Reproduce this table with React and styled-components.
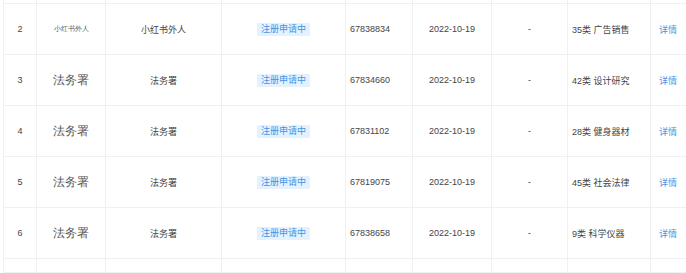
import React from "react";
import styled, { createGlobalStyle } from "styled-components";

const GlobalStyle = createGlobalStyle`
  html, body {
    margin: 0;
    padding: 0;
    background: #fff;
    overflow: hidden;
  }
  body {
    font-family: "Liberation Sans", "Noto Sans CJK SC", sans-serif;
    color: #333;
  }
`;

const COLS = "33px 69px 116px 124px 67px 79px 76px 83px 60px";

const Table = styled.div`
  margin-left: 3px;
  width: 710px;
`;

const Row = styled.div`
  display: grid;
  grid-template-columns: ${COLS};
  height: ${(p) => (p.$h ? `${p.$h}px` : "51px")};
`;

const Cell = styled.div`
  display: flex;
  align-items: center;
  justify-content: ${(p) => p.$align || "center"};
  padding: ${(p) => (p.$pad ? `0 ${p.$pad}px` : "0")};
  border-left: 1px solid #eef0f2;
  border-bottom: 1px solid #eef0f2;
  font-size: 9px;
  color: #444;
  white-space: nowrap;
  overflow: hidden;
`;

const Logo = styled.span`
  font-family: "Liberation Serif", serif;
  font-size: ${(p) => (p.$small ? "7.4px" : "11.5px")};
  color: #555;
  letter-spacing: ${(p) => (p.$small ? "0" : "0.3px")};
`;

const Tag = styled.span`
  display: inline-block;
  padding: 0 4px;
  height: 13px;
  line-height: 13px;
  background: #e4f2ff;
  color: #4592e6;
  font-size: 9px;
  border-radius: 1px;
`;

const Link = styled.span`
  color: #4a93e4;
  font-size: 9px;
`;

const rows = [
  { no: 2, logo: "小红书外人", small: true, name: "小红书外人", reg: "67838834", cls: "35类 广告销售" },
  { no: 3, logo: "法务署", name: "法务署", reg: "67834660", cls: "42类 设计研究" },
  { no: 4, logo: "法务署", name: "法务署", reg: "67831102", cls: "28类 健身器材" },
  { no: 5, logo: "法务署", name: "法务署", reg: "67819075", cls: "45类 社会法律" },
  { no: 6, logo: "法务署", name: "法务署", reg: "67838658", cls: "9类 科学仪器" },
];

const EmptyRow = ({ h }) => (
  <Row $h={h}>
    {Array.from({ length: 9 }, (_, i) => (
      <Cell key={i} />
    ))}
  </Row>
);

export default function App() {
  return (
    <>
      <GlobalStyle />
      <Table>
        <EmptyRow h={4} />
        {rows.map((r) => (
          <Row key={r.no}>
            <Cell>{r.no}</Cell>
            <Cell>
              <Logo $small={r.small}>{r.logo}</Logo>
            </Cell>
            <Cell>{r.name}</Cell>
            <Cell>
              <Tag>注册申请中</Tag>
            </Cell>
            <Cell $align="flex-start" $pad={4}>
              {r.reg}
            </Cell>
            <Cell>2022-10-19</Cell>
            <Cell>-</Cell>
            <Cell $align="flex-start" $pad={4}>
              {r.cls}
            </Cell>
            <Cell $align="flex-start" $pad={8}>
              <Link>详情</Link>
            </Cell>
          </Row>
        ))}
        <EmptyRow h={14} />
      </Table>
    </>
  );
}
